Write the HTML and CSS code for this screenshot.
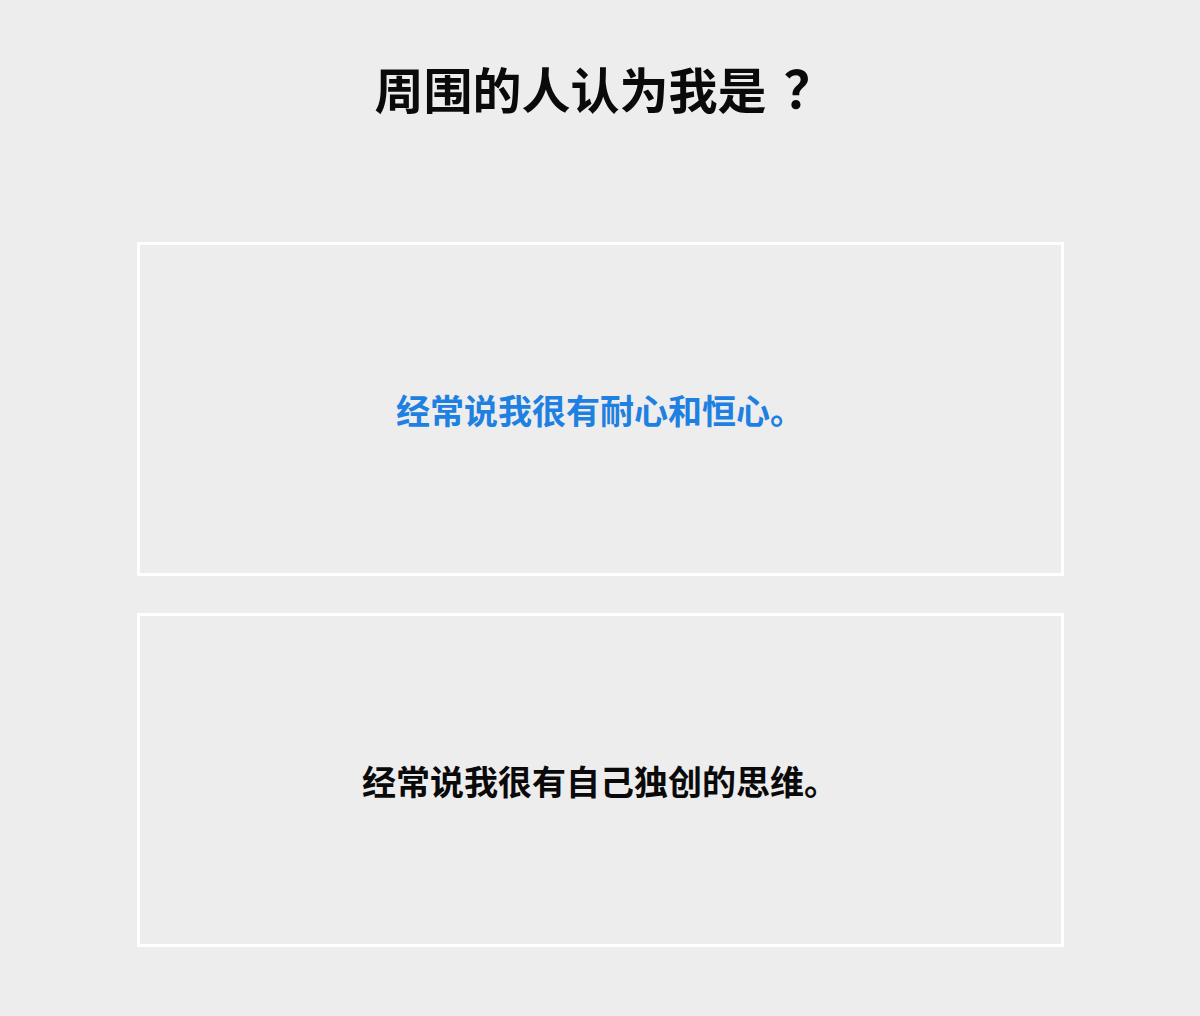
FILE: index.html
```html
<!DOCTYPE html>
<html lang="zh">
<head>
<meta charset="utf-8">
<link rel="stylesheet" href="styles.css">
</head>
<body>
<main class="page">
  <h1 class="title">周围的人认为我是<span class="qmark">？</span></h1>
  <div class="options">
    <div class="option option-selected">经常说我很有耐心和恒心。</div>
    <div class="option">经常说我很有自己独创的思维。</div>
  </div>
</main>
</body>
</html>
```
FILE: styles.css
```css
html, body {
  margin: 0;
  padding: 0;
  background: #ededed;
}
body {
  font-family: "Noto Sans CJK SC", "Noto Sans", sans-serif;
  color: #0a0a0a;
}
.page {
  width: 1200px;
  height: 1016px;
  display: flex;
  flex-direction: column;
  align-items: center;
}
.title {
  margin: 59px 0 0 10px;
  font-size: 49px;
  line-height: 56px;
  font-weight: 700;
  color: #0a0a0a;
}
.qmark {
  display: inline-block;
  margin-left: 17px;
  font-size: 52px;
}
.options {
  margin-top: 126px;
  display: flex;
  flex-direction: column;
  gap: 37px;
}
.option {
  box-sizing: border-box;
  width: 927px;
  height: 334px;
  border: 3px solid #ffffff;
  display: flex;
  align-items: center;
  justify-content: center;
  font-size: 34px;
  font-weight: 700;
  color: #0a0a0a;
}
.option-selected {
  color: #1e80e0;
}
```
